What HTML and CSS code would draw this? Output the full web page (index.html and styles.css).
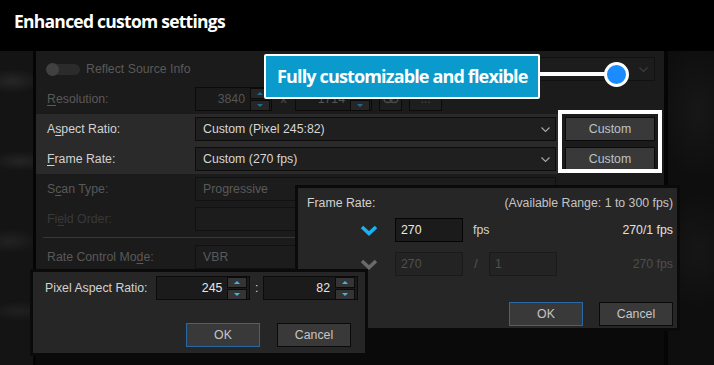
FILE: index.html
```html
<!DOCTYPE html>
<html>
<head>
<meta charset="utf-8">
<title>Enhanced custom settings</title>
<link rel="stylesheet" href="styles.css">
</head>
<body>
<div class="screen">
  <div class="caption">Enhanced custom settings</div>

  <div class="stage">
    <div class="backdrop-left"></div>

    <div class="panel">
      <div class="form">
        <div class="row-toggle">
          <span class="toggle"><span class="knob"></span></span>
          <span class="dim">Reflect Source Info</span>
          <span class="combo combo-preset off">
            <svg class="chev" width="9" height="5" viewBox="0 0 9 5"><polyline points="0.5,0.5 4.5,4.5 8.5,0.5"/></svg>
          </span>
        </div>

        <div class="row">
          <span class="label dim"><u>R</u>esolution:</span>
          <div class="res">
            <span class="spinbox off"><span class="val">3840</span><span class="spin"><span class="up"></span><span class="down"></span></span></span>
            <span class="times">x</span>
            <span class="spinbox off"><span class="val">1714</span><span class="spin"><span class="up"></span><span class="down"></span></span></span>
            <span class="tool">
              <svg width="16" height="10" viewBox="0 0 16 10"><rect x="1" y="1.5" width="8" height="7" rx="3.5"/><rect x="7" y="1.5" width="8" height="7" rx="3.5"/></svg>
            </span>
            <span class="tool tool-wide">...</span>
          </div>
        </div>

        <div class="row hot">
          <span class="label">A<u>s</u>pect Ratio:</span>
          <span class="combo"><span class="combo-text">Custom (Pixel 245:82)</span>
            <svg class="chev" width="9" height="5" viewBox="0 0 9 5"><polyline points="0.5,0.5 4.5,4.5 8.5,0.5"/></svg></span>
          <span class="btn btn-custom">Custom</span>
        </div>

        <div class="row hot">
          <span class="label"><u>F</u>rame Rate:</span>
          <span class="combo"><span class="combo-text">Custom (270 fps)</span>
            <svg class="chev" width="9" height="5" viewBox="0 0 9 5"><polyline points="0.5,0.5 4.5,4.5 8.5,0.5"/></svg></span>
          <span class="btn btn-custom">Custom</span>
        </div>

        <div class="row">
          <span class="label dim">S<u>c</u>an Type:</span>
          <span class="combo off"><span class="combo-text">Progressive</span></span>
        </div>

        <div class="row">
          <span class="label faint">Fi<u>e</u>ld Order:</span>
          <span class="combo off"></span>
        </div>

        <div class="divider"></div>

        <div class="row">
          <span class="label dim">Rate Control Mo<u>d</u>e:</span>
          <span class="combo off"><span class="combo-text">VBR</span></span>
        </div>
      </div>
      <div class="panel-foot"></div>

      <div class="focus-box"></div>
    </div>

    <div class="backdrop-right"></div>
  </div>

  <div class="callout">Fully customizable and flexible</div>
  <div class="callout-line"></div>
  <div class="callout-dot"></div>

  <div class="dialog dialog-rate">
    <div class="dialog-head">
      <span>Frame Rate:</span>
      <span class="range">(Available Range: 1 to 300 fps)</span>
    </div>
    <div class="rate-row">
      <svg class="pick" width="18" height="11" viewBox="0 0 18 11"><polyline points="2,2 9,8.5 16,2"/></svg>
      <span class="field">270</span>
      <span class="unit">fps</span>
      <span class="result">270/1 fps</span>
    </div>
    <div class="rate-row off">
      <svg class="pick" width="18" height="11" viewBox="0 0 18 11"><polyline points="2,2 9,8.5 16,2"/></svg>
      <span class="field">270</span>
      <span class="slash">/</span>
      <span class="field">1</span>
      <span class="result">270 fps</span>
    </div>
    <div class="dialog-buttons">
      <span class="btn btn-dlg btn-ok">OK</span>
      <span class="btn btn-dlg">Cancel</span>
    </div>
  </div>

  <div class="dialog dialog-par">
    <div class="par-row">
      <span class="par-label">Pixel Aspect Ratio:</span>
      <span class="spinbox spinbox-par"><span class="val">245</span><span class="spin"><span class="up"></span><span class="down"></span></span></span>
      <span class="colon">:</span>
      <span class="spinbox spinbox-par"><span class="val">82</span><span class="spin"><span class="up"></span><span class="down"></span></span></span>
    </div>
    <div class="dialog-buttons">
      <span class="btn btn-dlg btn-ok">OK</span>
      <span class="btn btn-dlg">Cancel</span>
    </div>
  </div>
</div>
</body>
</html>
```

FILE: styles.css
```css
body {
  margin: 0;
  background: #070707;
  font-family: "Liberation Sans", Arial, sans-serif;
  font-size: 12.3px;
  color: #d2d2d2;
}
.screen {
  position: relative;
  width: 714px;
  height: 365px;
  overflow: hidden;
}
.caption {
  height: 51px;
  box-sizing: border-box;
  padding: 9px 0 0 14px;
  background: #000;
  color: #fff;
  font-family: "Open Sans", sans-serif;
  font-weight: bold;
  font-size: 17.5px;
  letter-spacing: -0.75px;
}

/* backdrop + main settings panel */
.stage {
  display: flex;
  height: 314px;
}
.backdrop-left {
  width: 33px;
  background:
    radial-gradient(ellipse 30px 12px at 12px 30px, #262626, transparent),
    radial-gradient(ellipse 30px 10px at 20px 110px, #242424, transparent),
    radial-gradient(ellipse 28px 12px at 10px 190px, #222, transparent),
    radial-gradient(ellipse 30px 10px at 18px 260px, #202020, transparent),
    #141414;
}
.backdrop-right {
  flex: 1;
  background:
    radial-gradient(ellipse 40px 70px at 30px 60px, #171717, transparent),
    radial-gradient(ellipse 40px 60px at 30px 200px, #161616, transparent),
    #0e0e0e;
}
.panel {
  position: relative;
  width: 628px;
  border-left: 3px solid #050505;
  border-right: 4px solid #050505;
  display: flex;
  flex-direction: column;
}
.form {
  background: #1b1b1b;
  padding: 3px 0 30px;
}
.panel-foot {
  flex: 1;
  background: #0a0a0a;
}
.row, .row-toggle {
  height: 30px;
  padding: 0 9px 0 11px;
}
.row {
  display: grid;
  grid-template-columns: 148px 361px 1fr;
  align-items: center;
}
.row.hot {
  background: linear-gradient(90deg, #2a2a2a 522px, transparent 522px);
}
.row-toggle {
  display: flex;
  align-items: center;
}
.toggle {
  position: relative;
  width: 33px;
  height: 11px;
  margin-right: 6px;
  border-radius: 6px;
  background: #2b2b2b;
}
.knob {
  position: absolute;
  left: -1px;
  top: -1px;
  width: 13px;
  height: 13px;
  border-radius: 50%;
  background: #414141;
}
.dim { color: #595959; }
.faint { color: #393939; }
u { text-decoration: underline; text-underline-offset: 2px; }

.combo {
  display: flex;
  align-items: center;
  height: 24px;
  box-sizing: border-box;
  padding: 0 5px 0 7px;
  border: 1px solid #0c0c0c;
  background: #1f1f1f;
  color: #d6d6d6;
}
.combo-text { flex: 1; }
.combo.off {
  background: #1c1c1c;
  border-color: #111;
  color: #5a5a5a;
}
.combo-preset {
  width: 254px;
  margin-left: auto;
  justify-content: flex-end;
  padding-right: 6px;
}
.chev {
  fill: none;
  stroke: #a8a8a8;
  stroke-width: 1.1;
}
.combo-preset .chev { stroke: #3e3e3e; }

.res {
  display: flex;
  align-items: center;
}
.spinbox {
  display: flex;
  align-items: center;
  width: 77px;
  height: 24px;
  box-sizing: border-box;
  padding-right: 1px;
  border: 1px solid #0b0b0b;
  background: #1d1d1d;
}
.spinbox .val {
  flex: 1;
  padding-right: 5px;
  text-align: right;
}
.spinbox.off { color: #555; background: #1a1a1a; }
.spin {
  display: flex;
  flex-direction: column;
  gap: 1px;
  width: 20px;
}
.up, .down {
  display: flex;
  align-items: center;
  justify-content: center;
  height: 9px;
  border: 1px solid #0b0b0b;
  background: #343434;
}
.up::after, .down::after {
  content: "";
  border-left: 3px solid transparent;
  border-right: 3px solid transparent;
}
.up::after { border-bottom: 3px solid #3cb6ee; }
.down::after { border-top: 3px solid #3cb6ee; }
.spinbox.off .up, .spinbox.off .down { background: #262626; }
.spinbox.off .up::after { border-bottom-color: #1f6c90; }
.spinbox.off .down::after { border-top-color: #1f6c90; }
.times {
  width: 23px;
  text-align: center;
  color: #4f4f4f;
}
.tool {
  display: flex;
  align-items: center;
  justify-content: center;
  width: 23px;
  height: 24px;
  box-sizing: border-box;
  margin-left: 7px;
  border: 1px solid #0b0b0b;
  background: #1e1e1e;
  color: #4a4a4a;
}
.tool svg { fill: none; stroke: #4a4a4a; stroke-width: 1.4; }
.tool-wide { width: 33px; }

.btn {
  display: flex;
  align-items: center;
  justify-content: center;
  height: 24px;
  box-sizing: border-box;
  border: 1px solid #0a0a0a;
  background: #393939;
  color: #bcc2c8;
}
.btn-custom {
  width: 90px;
  justify-self: end;
}
.divider {
  height: 1px;
  margin: 3px 0 4px 7px;
  background: #363636;
}
.focus-box {
  position: absolute;
  left: 522px;
  top: 59px;
  width: 104px;
  height: 63px;
  box-sizing: border-box;
  border: 4px solid #fff;
}

/* annotation */
.callout {
  position: absolute;
  left: 264px;
  top: 54px;
  width: 276px;
  height: 45px;
  box-sizing: border-box;
  padding: 8px 0 0 11px;
  border: 2px solid #fff;
  border-radius: 2px;
  background: #0a9bcc;
  color: #fff;
  font-family: "Open Sans", sans-serif;
  font-weight: bold;
  font-size: 18px;
  letter-spacing: -0.85px;
  white-space: nowrap;
}
.callout-line {
  position: absolute;
  left: 540px;
  top: 72px;
  width: 70px;
  height: 4px;
  background: #fff;
}
.callout-dot {
  position: absolute;
  left: 604px;
  top: 62px;
  width: 25px;
  height: 25px;
  box-sizing: border-box;
  border: 3px solid #fff;
  border-radius: 50%;
  background: #1a8cff;
}

/* popup dialogs */
.dialog {
  position: absolute;
  box-sizing: border-box;
  border: 3px solid #0a0a0a;
  background: #262626;
}
.dialog-rate {
  left: 295px;
  top: 185px;
  width: 385px;
  height: 146px;
  padding: 7px 4px 0 9px;
}
.dialog-head {
  display: flex;
  justify-content: space-between;
  height: 16px;
  line-height: 16px;
}
.range { color: #c4c4c4; }
.rate-row {
  display: flex;
  align-items: center;
  height: 24px;
  margin-top: 7px;
  padding-left: 53px;
}
.rate-row + .rate-row { margin-top: 10px; }
.pick {
  fill: none;
  stroke: #19b2f2;
  stroke-width: 3.6;
  margin-right: 17px;
}
.field {
  display: flex;
  align-items: center;
  width: 68px;
  height: 24px;
  box-sizing: border-box;
  padding-left: 5px;
  border: 1px solid #050505;
  background: #1b1b1b;
  color: #eaeaea;
}
.unit { margin-left: 10px; }
.result {
  margin-left: auto;
  color: #e2e2e2;
}
.rate-row.off .pick { stroke: #6a6a6a; }
.rate-row.off .field {
  border-color: #1a1a1a;
  background: #232323;
  color: #505050;
}
.rate-row.off .result { color: #4e4e4e; }
.slash {
  width: 26px;
  text-align: center;
  color: #555;
}
.dialog-buttons {
  display: flex;
  justify-content: flex-end;
  gap: 16px;
  margin-top: 26px;
}
.btn-dlg {
  width: 74px;
  color: #c6c6c6;
}
.btn-ok { border-color: #2a68a3; }

.dialog-par {
  left: 30px;
  top: 269px;
  width: 338px;
  height: 87px;
  padding: 4px 7px 0 12px;
}
.par-row {
  display: flex;
  align-items: center;
  height: 24px;
}
.par-label {
  width: 111px;
}
.spinbox-par {
  width: 95px;
  padding-right: 2px;
  background: #1b1b1b;
  color: #e6e6e6;
}
.colon {
  width: 13px;
  text-align: center;
}
.dialog-par .dialog-buttons {
  margin-top: 23px;
  padding-right: 7px;
  gap: 17px;
}
```
